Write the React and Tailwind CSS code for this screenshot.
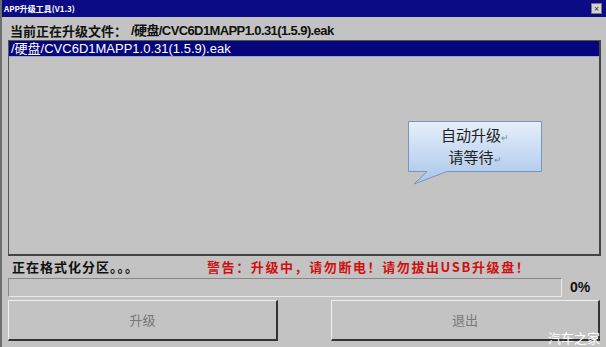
import React from "react";

export default function App() {
  const cjk = { fontFamily: '"Noto Sans CJK SC", sans-serif' };
  const sans = { fontFamily: '"Liberation Sans", "Noto Sans CJK SC", sans-serif' };
  return (
    <div className="w-[606px] h-[347px] bg-[#c3c3c3] relative overflow-hidden border-l-2 border-[#6e6e6e] flex flex-col">
      {/* title bar */}
      <div className="h-[17px] bg-[#0b0b84] flex items-center justify-between pl-[2px] pr-[4px] shrink-0">
        <span className="text-white text-[8px] font-bold leading-none" style={cjk}>APP升级工具(V1.3)</span>
        <div className="w-[11px] h-[11px] bg-[#d4d4d4] border border-[#777] flex items-center justify-center text-[9px] leading-none text-[#333]">×</div>
      </div>
      <div className="flex flex-col pl-[6px] pr-[5px] flex-1">
        <div className="h-[20px] flex items-end pl-[2px] font-bold text-[#111] leading-none gap-[4px]">
          <span className="text-[13px]" style={cjk}>当前正在升级文件：</span>
          <span style={sans} className="text-[13px] tracking-[-0.6px]">/硬盘/CVC6D1MAPP1.0.31(1.5.9).eak</span>
        </div>
        {/* list box */}
        <div className="mt-[3px] h-[216px] border-t border-l border-[#555] border-r-2 border-b-2 border-r-[#444] border-b-[#444] relative">
          <div className="h-[16px] bg-[#06067c] border-b border-[#9ba3d4] flex items-center pl-[2px] text-white text-[13px] leading-none" style={sans}>
            <span>/硬盘/CVC6D1MAPP1.0.31(1.5.9).eak</span>
          </div>
          {/* callout */}
          <div className="absolute left-[399px] top-[80px]">
            <svg width="135" height="68" viewBox="0 0 135 68" className="absolute left-0 top-0">
              <defs>
                <linearGradient id="g" x1="0" y1="0" x2="0" y2="1">
                  <stop offset="0" stopColor="#e6effa" />
                  <stop offset="1" stopColor="#a9c6ea" />
                </linearGradient>
              </defs>
              <path d="M0.5 0.5 H133.5 V50.5 H39 L6 63 L19 50.5 H0.5 Z" fill="url(#g)" stroke="#7894bf" strokeWidth="1" />
            </svg>
            <div className="relative w-[134px] h-[51px] flex flex-col items-center justify-center text-[15px] leading-[19px] text-[#222]" style={cjk}>
              <span>自动升级<span className="text-[9px] text-[#888]">↵</span></span>
              <span>请等待<span className="text-[9px] text-[#888]">↵</span></span>
            </div>
          </div>
        </div>
        {/* status row */}
        <div className="h-[21px] flex items-center pl-[4px] text-[13px] font-bold leading-none" style={cjk}>
          <span className="text-[#111] tracking-[1px] w-[195px]">正在格式化分区。。。</span>
          <span className="text-[#d01010] tracking-[1.6px]">警告：升级中，请勿断电！请勿拔出USB升级盘！</span>
        </div>
        {/* progress */}
        <div className="flex items-center h-[20px]">
          <div className="w-[554px] h-[19px] border-t border-l border-[#888] border-b border-r border-b-[#e8e8e8] border-r-[#e8e8e8] bg-[#c3c3c3]" />
          <span className="ml-[8px] text-[14px] font-bold text-[#111]" style={sans}>0%</span>
        </div>
        {/* buttons */}
        <div className="flex justify-between mt-[3px] pr-[1px]">
          <div className="w-[270px] h-[41px] border-t border-l border-[#f0f0f0] border-b-2 border-r-2 border-b-[#333] border-r-[#333] flex items-center justify-center text-[13px] text-[#777]" style={cjk}>升级</div>
          <div className="w-[269px] h-[41px] border-t border-l border-[#f0f0f0] border-b-2 border-r-2 border-b-[#333] border-r-[#333] flex items-center justify-center text-[13px] text-[#777]" style={cjk}>退出</div>
        </div>
      </div>
      <div className="absolute right-[6px] bottom-[3px] text-white text-[13px] leading-none" style={cjk}>汽车之家</div>
    </div>
  );
}
